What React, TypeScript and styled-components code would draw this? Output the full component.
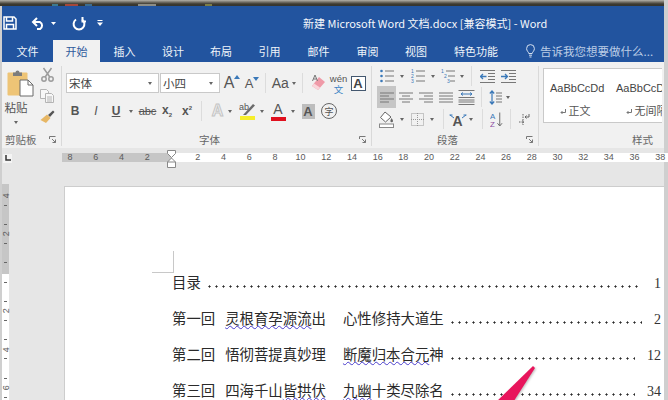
import React from 'react';
import styled, { createGlobalStyle } from 'styled-components';

const UI_FONT = '"Noto Sans CJK SC", "Liberation Sans", sans-serif';
const LATIN_FONT = '"Liberation Sans", "Noto Sans CJK SC", sans-serif';
const BLUE = '#22549f';
const RIBBON = '#f1f1f1';
const GROUND = '#e6e6e6';

const GlobalStyle = createGlobalStyle`
  html, body {
    margin: 0;
    padding: 0;
    background: #cfcfcf;
  }
`;

const Screen = styled.div`
  width: 668px;
  height: 400px;
  overflow: hidden;
  display: flex;
  flex-direction: column;
  font-family: ${UI_FONT};
  color: #444;
`;

const TopStrip = styled.div`
  height: 6px;
  flex: none;
  margin-right: 4px;
  background:
    linear-gradient(90deg, transparent 52px, #3d7a8f 52px 58px, transparent 58px 65px, #a5473a 65px 78px,
      transparent 78px 85px, #3d6d8f 85px 92px, transparent 92px 138px, #8d8d86 138px 156px,
      transparent 156px 205px, #7d7d45 205px 212px, transparent 212px) bottom / 100% 2px no-repeat,
    linear-gradient(#b4b1a8 0, #77736a 2px, #3d3a30 4px, #35342e 6px);
`;

const AppWindow = styled.div`
  margin: 0 4px 0 2px;
  flex: 1;
  min-height: 0;
  display: flex;
  flex-direction: column;
`;

const TitleBar = styled.div`
  height: 34px;
  flex: none;
  background: ${BLUE};
  display: flex;
  align-items: center;
`;

const QuickAccess = styled.div`
  width: 301px;
  display: flex;
  align-items: center;
`;

const Qat = styled.span<{ $w: number }>`
  width: ${(p) => p.$w}px;
  display: flex;
  justify-content: center;
  align-items: center;
  flex: none;
`;

const Title = styled.div`
  font-size: 11px;
  color: #f4f7fb;
  white-space: pre;
`;

const TabBar = styled.div`
  height: 22px;
  flex: none;
  background: ${BLUE};
  display: flex;
  align-items: stretch;
`;

const Tab = styled.div<{ $w: number; $active?: boolean }>`
  width: ${(p) => p.$w}px;
  flex: none;
  display: flex;
  align-items: center;
  justify-content: center;
  font-size: 11px;
  color: ${(p) => (p.$active ? '#2f5a9c' : '#f0f4fa')};
  background: ${(p) => (p.$active ? RIBBON : 'transparent')};
`;

const TellMe = styled.div`
  margin-left: 14px;
  display: flex;
  align-items: center;
  gap: 5px;
  font-size: 11.5px;
  color: #bccde6;
  white-space: nowrap;
`;

const Ribbon = styled.div`
  height: 86px;
  flex: none;
  box-sizing: border-box;
  padding: 4px 0 2px;
  background: ${RIBBON};
  display: flex;
`;

const Group = styled.div<{ $w: number; $flat?: boolean }>`
  width: ${(p) => p.$w}px;
  flex: none;
  box-sizing: border-box;
  display: flex;
  flex-direction: column;
  border-right: ${(p) => (p.$flat ? 'none' : '1px solid #d9d9d9')};
  overflow: hidden;
`;

const GroupBody = styled.div`
  height: 66px;
  flex: none;
`;

const GroupFooter = styled.div<{ $pad: number }>`
  height: 14px;
  display: flex;
  align-items: center;
  padding-left: ${(p) => p.$pad}px;
  padding-right: 5px;
  font-size: 10.5px;
  color: #666;
`;

const Launcher = styled.svg`
  margin-left: auto;
  width: 7px;
  height: 7px;
`;

const ClipboardBody = styled(GroupBody)`
  display: flex;
`;

const PasteColumn = styled.div`
  width: 36px;
  display: flex;
  flex-direction: column;
  align-items: center;
  padding-top: 3px;
  font-size: 11.5px;
  color: #555;
`;

const PasteLabel = styled.div`
  margin-top: 1px;
  line-height: 18px;
  margin-right: 8px;
`;

const PasteCaret = styled.div`
  margin: 5px 8px 0 0;
`;

const ClipTools = styled.div`
  width: 18px;
  display: flex;
  flex-direction: column;
  align-items: center;
  gap: 7px;
  padding-top: 1px;
`;

const ToolRow = styled.div<{ $top?: number; $h?: number; $indent?: number }>`
  display: flex;
  align-items: center;
  height: ${(p) => p.$h ?? 20}px;
  margin-top: ${(p) => p.$top ?? 0}px;
  padding-left: ${(p) => p.$indent ?? 0}px;
`;

const Cell = styled.span<{ $w: number; $on?: boolean }>`
  width: ${(p) => p.$w}px;
  height: 100%;
  flex: none;
  display: flex;
  align-items: center;
  justify-content: center;
  background: ${(p) => (p.$on ? '#c6c6c6' : 'transparent')};
`;

const Sep = styled(Cell)`
  &::after {
    content: '';
    width: 1px;
    height: 20px;
    background: #dcdcdc;
  }
`;

const Caret = styled.i`
  display: block;
  width: 0;
  height: 0;
  border-left: 2.5px solid transparent;
  border-right: 2.5px solid transparent;
  border-top: 3px solid #666;
`;

const Combo = styled.div<{ $w: number; $left?: number }>`
  width: ${(p) => p.$w}px;
  height: 20px;
  margin-left: ${(p) => p.$left ?? 0}px;
  box-sizing: border-box;
  flex: none;
  display: flex;
  align-items: center;
  justify-content: space-between;
  padding: 0 6px 0 2px;
  background: #fff;
  border: 1px solid #c9c9c9;
  font-size: 11.5px;
  color: #444;
`;

const Glyph = styled.span<{ $size?: number; $weight?: number; $italic?: boolean; $color?: string }>`
  font-family: ${LATIN_FONT};
  font-size: ${(p) => p.$size ?? 12}px;
  font-weight: ${(p) => p.$weight ?? 400};
  font-style: ${(p) => (p.$italic ? 'italic' : 'normal')};
  color: ${(p) => p.$color ?? '#555'};
  line-height: 1;
  white-space: nowrap;
`;

const Underlined = styled(Glyph)`
  text-decoration: underline;
`;

const Struck = styled(Glyph)`
  text-decoration: line-through;
`;

const Ghost = styled(Glyph)`
  color: #f1f1f1;
  -webkit-text-stroke: 1px #c4c4c4;
`;

const SizeMark = styled.span`
  display: flex;
  align-items: flex-start;
  gap: 0;
`;

const TinyScript = styled.sub`
  font-size: 6px;
  line-height: 1;
`;

const TinySuper = styled.sup`
  font-size: 6px;
  line-height: 1;
`;

const Phonetic = styled.span`
  display: flex;
  flex-direction: column;
  align-items: center;
  font-family: ${LATIN_FONT};
  font-size: 9.5px;
  line-height: 11px;
  color: #555;
`;

const PhoneticChar = styled.span`
  font-family: ${UI_FONT};
  color: #3b83c4;
  font-size: 9.5px;
  line-height: 10px;
`;

const BoxedA = styled.span`
  width: 15px;
  height: 15px;
  box-sizing: border-box;
  border: 1px solid #44586f;
  background: #fff;
  display: flex;
  align-items: center;
  justify-content: center;
  font-family: ${LATIN_FONT};
  font-size: 13px;
  font-weight: 700;
  color: #444;
`;

const ShadedA = styled(BoxedA)`
  width: 13px;
  border: none;
  background: #bdbdbd;
  color: #555;
`;

const Encircled = styled.span`
  width: 16px;
  height: 16px;
  box-sizing: border-box;
  border: 1px solid #666;
  border-radius: 50%;
  display: flex;
  align-items: center;
  justify-content: center;
  font-size: 9px;
  color: #555;
`;

const ColorMark = styled.span`
  display: flex;
  flex-direction: column;
  align-items: center;
`;

const ColorBar = styled.i<{ $color: string }>`
  display: block;
  width: 15px;
  height: 4px;
  margin-top: 1px;
  background: ${(p) => p.$color};
`;

const StylesBody = styled(GroupBody)`
  padding: 2px 0 0 4px;
  box-sizing: border-box;
`;

const Gallery = styled.div`
  height: 55px;
  box-sizing: border-box;
  background: #fff;
  border: 1px solid #c9c9c9;
  border-right: none;
  display: flex;
  overflow: hidden;
`;

const StyleCard = styled.div`
  width: 66px;
  flex: none;
  padding-left: 6px;
  box-sizing: border-box;
  display: flex;
  flex-direction: column;
  align-items: flex-start;
`;

const StylePreview = styled.div`
  margin-top: 12px;
  font-family: ${LATIN_FONT};
  font-size: 11px;
  line-height: 14px;
  color: #444;
  white-space: nowrap;
`;

const StyleName = styled.div`
  margin: 8px 0 0 10px;
  font-size: 11px;
  line-height: 14px;
  color: #555;
  white-space: nowrap;
`;

const RulerBand = styled.div`
  height: 20px;
  flex: none;
  background: ${GROUND};
  display: flex;
  align-items: center;
`;

const TabStop = styled.div`
  width: 9px;
  height: 9px;
  margin-left: 1px;
  flex: none;
  background: #f4f4f4;
  display: flex;
  align-items: center;
  justify-content: center;
`;

const HorizontalRuler = styled.div`
  position: relative;
  margin-left: 50px;
  flex: 1;
  height: 9px;
  margin-top: -2px;
  background: linear-gradient(90deg, #c6c6c6 110px, #fff 110px);
  display: flex;
`;

const RulerNum = styled.span`
  width: 25.7px;
  flex: none;
  text-align: center;
  font-family: ${LATIN_FONT};
  font-size: 9px;
  line-height: 9px;
  color: #5a5a5a;
`;

const RulerStart = styled.div`
  width: 110px;
  flex: none;
  display: flex;
  justify-content: flex-end;
  padding-right: 12px;
  box-sizing: border-box;
`;

const RulerEnd = styled.div`
  flex: 1;
  min-width: 0;
  padding-left: 13px;
  display: flex;
  overflow: hidden;
`;

const IndentMark = styled.svg`
  position: absolute;
  left: 105px;
  top: -3px;
  width: 9px;
  height: 18px;
`;

const Workspace = styled.div`
  flex: 1;
  min-height: 0;
  background: ${GROUND};
  padding-top: 18px;
  display: flex;
  overflow: hidden;
`;

const VerticalRuler = styled.div`
  width: 7px;
  height: 216px;
  margin-top: -2px;
  padding-top: 7px;
  box-sizing: border-box;
  flex: none;
  background: linear-gradient(#c6c6c6 90px, #fff 90px);
  display: flex;
  flex-direction: column;
  align-items: center;
`;

const VMark = styled.span`
  height: 9.6px;
  flex: none;
  display: flex;
  align-items: center;
  justify-content: center;
  font-family: ${LATIN_FONT};
  font-size: 9px;
  color: #5a5a5a;
  transform: rotate(-90deg);
`;

const VTick = styled.i`
  height: 9.6px;
  flex: none;
  display: flex;
  align-items: center;

  &::after {
    content: '';
    width: 3px;
    height: 1px;
    background: #666;
  }
`;

const Page = styled.div`
  position: relative;
  margin-left: 55px;
  flex: 1;
  box-sizing: border-box;
  padding: 76px 3px 0 107px;
  background: #fff;
  border-left: 1px solid #cdcdcd;
  border-top: 1px solid #cdcdcd;
`;

const CropMark = styled.i`
  position: absolute;
  left: 87px;
  top: 64px;
  width: 21px;
  height: 21px;
  border-right: 1px solid #c8c8c8;
  border-bottom: 1px solid #c8c8c8;
`;

const TocRow = styled.div`
  height: 36px;
  display: flex;
  align-items: center;
  font-size: 14.4px;
  color: #2a2a2a;
  white-space: pre;
`;

const TocPart = styled.span<{ $gap: number }>`
  margin-left: ${(p) => p.$gap}px;
`;

const Misspelt = styled.span`
  text-decoration: underline wavy #4a3dcc 1px;
  text-underline-offset: 1px;
`;

const Leader = styled.i`
  flex: 1;
  height: 3px;
  margin: 10px 12px 0 5px;
  background-image: radial-gradient(circle, #2a2a2a 0.9px, transparent 1.2px);
  background-size: 7px 3px;
`;

const PageNum = styled.span`
  margin-top: 5px;
  font-family: "Liberation Serif", serif;
  font-size: 14px;
  color: #333;
`;

const Arrow = styled.svg`
  position: absolute;
  left: 428px;
  top: 177px;
  width: 44px;
  height: 40px;
  filter: drop-shadow(1px 1px 1px rgba(0, 0, 0, 0.25));
`;

const BL = '#3a78b8';

const SaveIcon = () => (
  <svg width="14" height="14" viewBox="0 0 14 14" fill="none" stroke="#fff" strokeWidth="1.5">
    <path d="M1 1h10l2 2v10H1z" />
    <path d="M3.5 1v4h6V1M3.5 13V8.5h7V13" />
  </svg>
);

const UndoIcon = () => (
  <svg width="15" height="13" viewBox="0 0 15 13" fill="none" stroke="#fff" strokeWidth="2">
    <path d="M2 5h7a4 4 0 0 1 0 7H6" />
    <path d="M6 1 2 5l4 4" />
  </svg>
);

const RedoIcon = () => (
  <svg width="14" height="15" viewBox="0 0 14 15" fill="none" stroke="#fff" strokeWidth="2">
    <path d="M4 3.5a5.4 5.4 0 1 0 6 0" />
    <path d="M10.5 1v4.5H15" />
  </svg>
);

const SmallCaret = ({ color = '#fff' }: { color?: string }) => (
  <svg width="5" height="3" viewBox="0 0 5 3">
    <path d="M0 0h5L2.5 3z" fill={color} />
  </svg>
);

const CustomizeIcon = () => (
  <svg width="6" height="6" viewBox="0 0 6 6" fill="#fff">
    <rect x="0.5" width="5" height="1" />
    <path d="M0 2.5h6L3 6z" />
  </svg>
);

const BulbIcon = () => (
  <svg width="9" height="14" viewBox="0 0 9 14" fill="none" stroke="#d5e0f0" strokeWidth="1">
    <path d="M2.8 9.5C2.5 7.8.6 7 .6 4.5a3.9 3.9 0 0 1 7.8 0C8.4 7 6.5 7.8 6.2 9.5z" />
    <path d="M3 11.2h3M3.5 13h2" />
  </svg>
);

const PasteIcon = () => (
  <svg width="27" height="28" viewBox="0 0 27 28">
    <rect x="0.5" y="3.5" width="20" height="23" rx="1" fill="#eec476" />
    <path d="M6 3.5h2.5a2 2 0 0 1 4 0H15V7H6z" fill="#7d7d7d" />
    <path d="M13 11h8l5 5v11H13z" fill="#fff" stroke="#6b6b6b" />
    <path d="M21 11v5h5" fill="none" stroke="#6b6b6b" />
  </svg>
);

const ScissorsIcon = () => (
  <svg width="13" height="15" viewBox="0 0 13 15" fill="none" stroke="#9c9c9c" strokeWidth="1.5">
    <circle cx="3" cy="12" r="2.2" />
    <circle cx="10" cy="12" r="2.2" />
    <path d="M4.2 10 10.5 1M8.8 10 2.5 1" />
  </svg>
);

const CopyIcon = () => (
  <svg width="14" height="14" viewBox="0 0 14 14" fill="#f7f7f7" stroke="#b4b4b4">
    <path d="M.5.5h6l2 2v7h-8z" />
    <path d="M5.5 4.5h6l2 2v7h-8z" />
    <path d="M7 8h5M7 10h5M7 12h5" />
  </svg>
);

const BrushIcon = () => (
  <svg width="15" height="14" viewBox="0 0 15 14">
    <path d="M8 5 13 .5 14.5 2 10 7z" fill="#555" />
    <path d="M7 4.5 10.5 8 6 13 .5 10z" fill="#e7b765" />
  </svg>
);

const LauncherIcon = () => (
  <Launcher viewBox="0 0 7 7" fill="none" stroke="#777">
    <path d="M.5 3V.5H6.5" />
    <path d="M3 3l3.5 3.5M6.5 3.5v3h-3" />
  </Launcher>
);

const GrowIcon = ({ down }: { down?: boolean }) => (
  <SizeMark>
    <Glyph $size={down ? 13 : 16}>A</Glyph>
    <svg width="6" height="4" viewBox="0 0 6 4">
      <path d={down ? 'M0 0h6L3 4z' : 'M3 0l3 4H0z'} fill={BL} />
    </svg>
  </SizeMark>
);

const EraserIcon = () => (
  <svg width="16" height="18" viewBox="0 0 16 18">
    <path d="M9 3 15 8 8 16 2 12z" fill="#ef9aa8" />
    <path d="M2 12l6 4 2-2.4-6-4.2z" fill="#f9d5da" />
    <path d="M2.5 7 5 1l2.5 6M3.5 5h3" fill="none" stroke="#777" />
  </svg>
);

const PenIcon = () => (
  <svg width="17" height="13" viewBox="0 0 17 13">
    <text x="0" y="8" fontSize="9" fontFamily="Liberation Sans" fill="#555">ab</text>
    <path d="M4 13 14 2l2 1.5L7 13z" fill="#6b6b6b" />
  </svg>
);

type LinesProps = { align?: 'left' | 'center' | 'right' | 'full' };

const LinesIcon = ({ align = 'left' }: LinesProps) => {
  const rows = [1, 4, 7, 10];
  const span = (i: number) => {
    const short = i % 2 === 1;
    if (align === 'full' || !short) return 'M0 0h14';
    if (align === 'center') return 'M3 0h8';
    if (align === 'right') return 'M5 0h9';
    return 'M0 0h9';
  };
  return (
    <svg width="14" height="11" viewBox="0 0 14 11" fill="none" stroke="#777">
      {rows.map((y, i) => (
        <path key={y} d={span(i)} transform={`translate(0 ${y})`} />
      ))}
    </svg>
  );
};

const DistributedIcon = () => (
  <svg width="17" height="15" viewBox="0 0 17 15" fill="none" stroke="#777">
    <path d="M.5.5h16M.5 14.5h16" />
    <path d="M.5 7.5h16M.5 10h16M.5 12h16" />
    <path d="M3 4h11M3 4l2-1.5M3 4l2 1.5M14 4l-2-1.5M14 4l-2 1.5" stroke={BL} />
  </svg>
);

const ListIcon = ({ kind }: { kind: 'bullet' | 'number' | 'multi' }) => (
  <svg width="14" height="14" viewBox="0 0 14 14" fill="none">
    {[2, 7, 12].map((y, i) => (
      <React.Fragment key={y}>
        {kind === 'bullet' && <circle cx="1.5" cy={y} r="1.3" fill={BL} />}
        {kind !== 'bullet' && (
          <text x={kind === 'multi' ? i * 3 : 0} y={y + 2} fontSize="5" fontFamily="Liberation Sans" fill={BL}>
            {i + 1}
          </text>
        )}
        <path d={`M${kind === 'multi' ? 5 + i * 2 : 5} ${y}h${kind === 'multi' ? 9 - i * 2 : 9}`} stroke="#777" />
      </React.Fragment>
    ))}
  </svg>
);

const IndentIcon = ({ increase }: { increase?: boolean }) => (
  <svg width="15" height="13" viewBox="0 0 15 13" fill="none" stroke="#777">
    <path d="M0 .5h15M8 3.5h7M8 6.5h7M8 9.5h7M0 12.5h15" />
    {increase ? (
      <path d="M0 6.5h6M4 4l2.5 2.5L4 9" stroke={BL} strokeWidth="1.3" />
    ) : (
      <path d="M6.5 6.5h-6M3 4 .5 6.5 3 9" stroke={BL} strokeWidth="1.3" />
    )}
  </svg>
);

const SpacingIcon = () => (
  <svg width="13" height="15" viewBox="0 0 13 15" fill="none">
    <path d="M3 1v13M.8 3.5 3 1l2.2 2.5M.8 11.5 3 14l2.2-2.5" stroke={BL} strokeWidth="1.2" />
    <path d="M7 3h6M7 6h6M7 9h6M7 12h6" stroke="#777" />
  </svg>
);

const BucketIcon = () => (
  <svg width="15" height="17" viewBox="0 0 15 17" fill="none">
    <path d="M6 1 1.5 6.500l5 4.500L12 6z" fill="#fff" stroke="#666" />
    <path d="M12.500 7c1 1.500 1.500 2.200 1.500 3a1.300 1.300 0 0 1-2.600 0c0-.8.500-1.500 1.100-3z" fill="#666" />
    <rect x="0.5" y="13" width="14" height="3.5" fill="#fff" stroke="#888" />
  </svg>
);

const BorderIcon = () => (
  <svg width="13" height="13" viewBox="0 0 13 13" fill="none" stroke="#999" strokeDasharray="1 1">
    <rect x="0.5" y="0.5" width="12" height="12" />
    <path d="M6.5 0v13M0 6.5h13" />
  </svg>
);

const EffectsIcon = () => (
  <svg width="18" height="17" viewBox="0 0 18 17">
    <text x="3.5" y="15" fontSize="14" fontWeight="700" fontFamily="Liberation Sans" fill="#555">A</text>
    <path d="M1 4l4 3M17 4l-4 3M.5 4h3M17.5 4h-3" stroke={BL} fill="none" />
  </svg>
);

const SortIcon = () => (
  <svg width="14" height="17" viewBox="0 0 14 17">
    <text x="0" y="8" fontSize="8.5" fontFamily="Liberation Sans" fill={BL}>A</text>
    <text x="0" y="16.5" fontSize="8.5" fontFamily="Liberation Sans" fill="#8c4a9e">Z</text>
    <path d="M10.5 1v14M8 12.5l2.5 3 2.5-3" fill="none" stroke="#666" />
  </svg>
);

const MarksIcon = () => (
  <svg width="11" height="13" viewBox="0 0 11 13" fill="none" stroke="#666">
    <path d="M10 1v3H6M7.5 2.5 6 4l1.5 1.5" />
    <path d="M0 9h5M3.5 7.5 5 9l-1.5 1.5M4 1v11" strokeDasharray="1.5 1" />
  </svg>
);

const ReturnMark = () => (
  <svg width="6" height="7" viewBox="0 0 6 7" fill="none" stroke="#777">
    <path d="M5.5 1v3.5H1M2.5 3 1 4.5 2.5 6" />
  </svg>
);

const TABS: [string, number][] = [
  ['文件', 51], ['开始', 47], ['插入', 49], ['设计', 48], ['布局', 48], ['引用', 49],
  ['邮件', 49], ['审阅', 49], ['视图', 48], ['特色功能', 72],
];

const VMARKS: (string | null)[] = [
  '4', null, '', null, '2', null, '', null, '', null, '', null,
  '2', null, '', null, '4', null, '', null, '6', null,
];

const ClipboardGroup = () => (
  <Group $w={60}>
    <ClipboardBody>
      <PasteColumn>
        <PasteIcon />
        <PasteLabel>粘贴</PasteLabel>
        <PasteCaret><Caret /></PasteCaret>
      </PasteColumn>
      <ClipTools>
        <ScissorsIcon />
        <CopyIcon />
        <BrushIcon />
      </ClipTools>
    </ClipboardBody>
    <GroupFooter $pad={3}>剪贴板<LauncherIcon /></GroupFooter>
  </Group>
);

const FontGroup = () => (
  <Group $w={310}>
    <GroupBody>
      <ToolRow $top={7} $indent={4}>
        <Combo $w={93}>宋体<Caret /></Combo>
        <Combo $w={60} $left={1}>小四<Caret /></Combo>
        <Cell $w={2} />
        <Cell $w={20}><GrowIcon /></Cell>
        <Cell $w={20}><GrowIcon down /></Cell>
        <Sep $w={7} />
        <Cell $w={30}><Glyph $size={14}>Aa</Glyph>&nbsp;<Caret /></Cell>
        <Sep $w={7} />
        <Cell $w={23}><EraserIcon /></Cell>
        <Cell $w={19}><Phonetic>wén<PhoneticChar>文</PhoneticChar></Phonetic></Cell>
        <Cell $w={20}><BoxedA>A</BoxedA></Cell>
      </ToolRow>
      <ToolRow $top={8} $indent={3}>
        <Cell $w={20}><Glyph $weight={700}>B</Glyph></Cell>
        <Cell $w={22}><Glyph $italic>I</Glyph></Cell>
        <Cell $w={18}><Underlined $weight={700}>U</Underlined></Cell>
        <Cell $w={12}><Caret /></Cell>
        <Cell $w={21}><Struck $size={11}>abc</Struck></Cell>
        <Cell $w={18}><Glyph $weight={700}>x<TinyScript>2</TinyScript></Glyph></Cell>
        <Cell $w={22}><Glyph $weight={700}>x<TinySuper>2</TinySuper></Glyph></Cell>
        <Sep $w={7} />
        <Cell $w={3} />
        <Cell $w={19}><Ghost $size={16} $weight={700}>A</Ghost></Cell>
        <Cell $w={5}><Caret /></Cell>
        <Cell $w={4} />
        <Cell $w={22}><ColorMark><PenIcon /><ColorBar $color="#f6ee2a" /></ColorMark></Cell>
        <Cell $w={8}><Caret /></Cell>
        <Cell $w={24}><ColorMark><Glyph $size={14}>A</Glyph><ColorBar $color="#e0101e" /></ColorMark></Cell>
        <Cell $w={6}><Caret /></Cell>
        <Cell $w={24}><ShadedA>A</ShadedA></Cell>
        <Cell $w={18}><Encircled>字</Encircled></Cell>
      </ToolRow>
    </GroupBody>
    <GroupFooter $pad={137}>字体<LauncherIcon /></GroupFooter>
  </Group>
);

const ParagraphGroup = () => (
  <Group $w={167}>
    <GroupBody>
      <ToolRow $h={20} $indent={4}>
        <Cell $w={21}><ListIcon kind="bullet" /></Cell>
        <Cell $w={10}><Caret /></Cell>
        <Cell $w={21}><ListIcon kind="number" /></Cell>
        <Cell $w={9}><Caret /></Cell>
        <Cell $w={21}><ListIcon kind="multi" /></Cell>
        <Cell $w={8}><Caret /></Cell>
        <Sep $w={11} />
        <Cell $w={21}><IndentIcon /></Cell>
        <Cell $w={20}><IndentIcon increase /></Cell>
      </ToolRow>
      <ToolRow $h={22} $indent={5}>
        <Cell $w={19} $on><LinesIcon /></Cell>
        <Cell $w={20}><LinesIcon align="center" /></Cell>
        <Cell $w={20}><LinesIcon align="right" /></Cell>
        <Cell $w={20}><LinesIcon align="full" /></Cell>
        <Cell $w={21}><DistributedIcon /></Cell>
        <Sep $w={8} />
        <Cell $w={20}><SpacingIcon /></Cell>
        <Cell $w={6}><Caret /></Cell>
      </ToolRow>
      <ToolRow $h={22} $indent={4}>
        <Cell $w={21}><BucketIcon /></Cell>
        <Cell $w={10}><Caret /></Cell>
        <Cell $w={20}><BorderIcon /></Cell>
        <Cell $w={10}><Caret /></Cell>
        <Sep $w={12} />
        <Cell $w={18}><EffectsIcon /></Cell>
        <Cell $w={7}><Caret /></Cell>
        <Sep $w={16} />
        <Cell $w={13}><SortIcon /></Cell>
        <Sep $w={14} />
        <Cell $w={15}><MarksIcon /></Cell>
      </ToolRow>
    </GroupBody>
    <GroupFooter $pad={65}>段落<LauncherIcon /></GroupFooter>
  </Group>
);

const StylesGroup = () => (
  <Group $w={123} $flat>
    <StylesBody>
      <Gallery>
        <StyleCard>
          <StylePreview>AaBbCcDd</StylePreview>
          <StyleName><ReturnMark /> 正文</StyleName>
        </StyleCard>
        <StyleCard>
          <StylePreview>AaBbCcDd</StylePreview>
          <StyleName><ReturnMark /> 无间隔</StyleName>
        </StyleCard>
      </Gallery>
    </StylesBody>
    <GroupFooter $pad={93}>样式</GroupFooter>
  </Group>
);

const App = () => {
  const rulerEnd = Array.from({ length: 19 }, (_, i) => (i + 1) * 2);
  return (
    <Screen>
      <GlobalStyle />
      <TopStrip />
      <AppWindow>
        <TitleBar>
          <QuickAccess>
            <Qat $w={15}><SaveIcon /></Qat>
            <Qat $w={13} />
            <Qat $w={16}><UndoIcon /></Qat>
            <Qat $w={14}><SmallCaret /></Qat>
            <Qat $w={11} />
            <Qat $w={15}><RedoIcon /></Qat>
            <Qat $w={9} />
            <Qat $w={10}><CustomizeIcon /></Qat>
          </QuickAccess>
          <Title>新建 Microsoft Word 文档.docx [兼容模式] - Word</Title>
        </TitleBar>
        <TabBar>
          {TABS.map(([label, w]) => (
            <Tab key={label} $w={w} $active={label === '开始'}>{label}</Tab>
          ))}
          <TellMe><BulbIcon />告诉我您想要做什么...</TellMe>
        </TabBar>
        <Ribbon>
          <ClipboardGroup />
          <FontGroup />
          <ParagraphGroup />
          <StylesGroup />
        </Ribbon>
        <RulerBand>
          <TabStop>
            <svg width="6" height="6" viewBox="0 0 6 6" fill="none" stroke="#333" strokeWidth="1.5">
              <path d="M1 0v5h5" />
            </svg>
          </TabStop>
          <HorizontalRuler>
            <RulerStart>
              {['8', '6', '4', '2'].map((n) => <RulerNum key={n}>{n}</RulerNum>)}
            </RulerStart>
            <RulerEnd>
              {rulerEnd.map((n) => <RulerNum key={n}>{n}</RulerNum>)}
            </RulerEnd>
            <IndentMark viewBox="0 0 9 18" fill="#fff" stroke="#888">
              <path d="M.5.5h8v3l-4 4-4-4zM4.5 8l4 4v5.5h-8V12z" />
              <path d="M.5 12h8" />
            </IndentMark>
          </HorizontalRuler>
        </RulerBand>
        <Workspace>
          <VerticalRuler>
            {VMARKS.map((m, i) =>
              m === null ? <VTick key={i} /> : <VMark key={i}>{m}</VMark>
            )}
          </VerticalRuler>
          <Page>
            <CropMark />
            <TocRow>目录<Leader /><PageNum>1</PageNum></TocRow>
            <TocRow>
              第一回
              <TocPart $gap={10}><Misspelt>灵根育孕源流</Misspelt>出</TocPart>
              <TocPart $gap={17}>心性修持大道生</TocPart>
              <Leader /><PageNum>2</PageNum>
            </TocRow>
            <TocRow>
              第二回
              <TocPart $gap={10}>悟彻菩提真妙理</TocPart>
              <TocPart $gap={17}><Misspelt>断魔归本合元</Misspelt>神</TocPart>
              <Leader /><PageNum>12</PageNum>
            </TocRow>
            <TocRow>
              第三回
              <TocPart $gap={10}>四海千山<Misspelt>皆拱伏</Misspelt></TocPart>
              <TocPart $gap={17}><Misspelt>九幽</Misspelt>十类尽除名</TocPart>
              <Leader /><PageNum>34</PageNum>
            </TocRow>
            <Arrow viewBox="0 0 44 40">
              <path d="M40 2 42 4 19 40H1z" fill="#e8155c" />
            </Arrow>
          </Page>
        </Workspace>
      </AppWindow>
    </Screen>
  );
};

export default App;
